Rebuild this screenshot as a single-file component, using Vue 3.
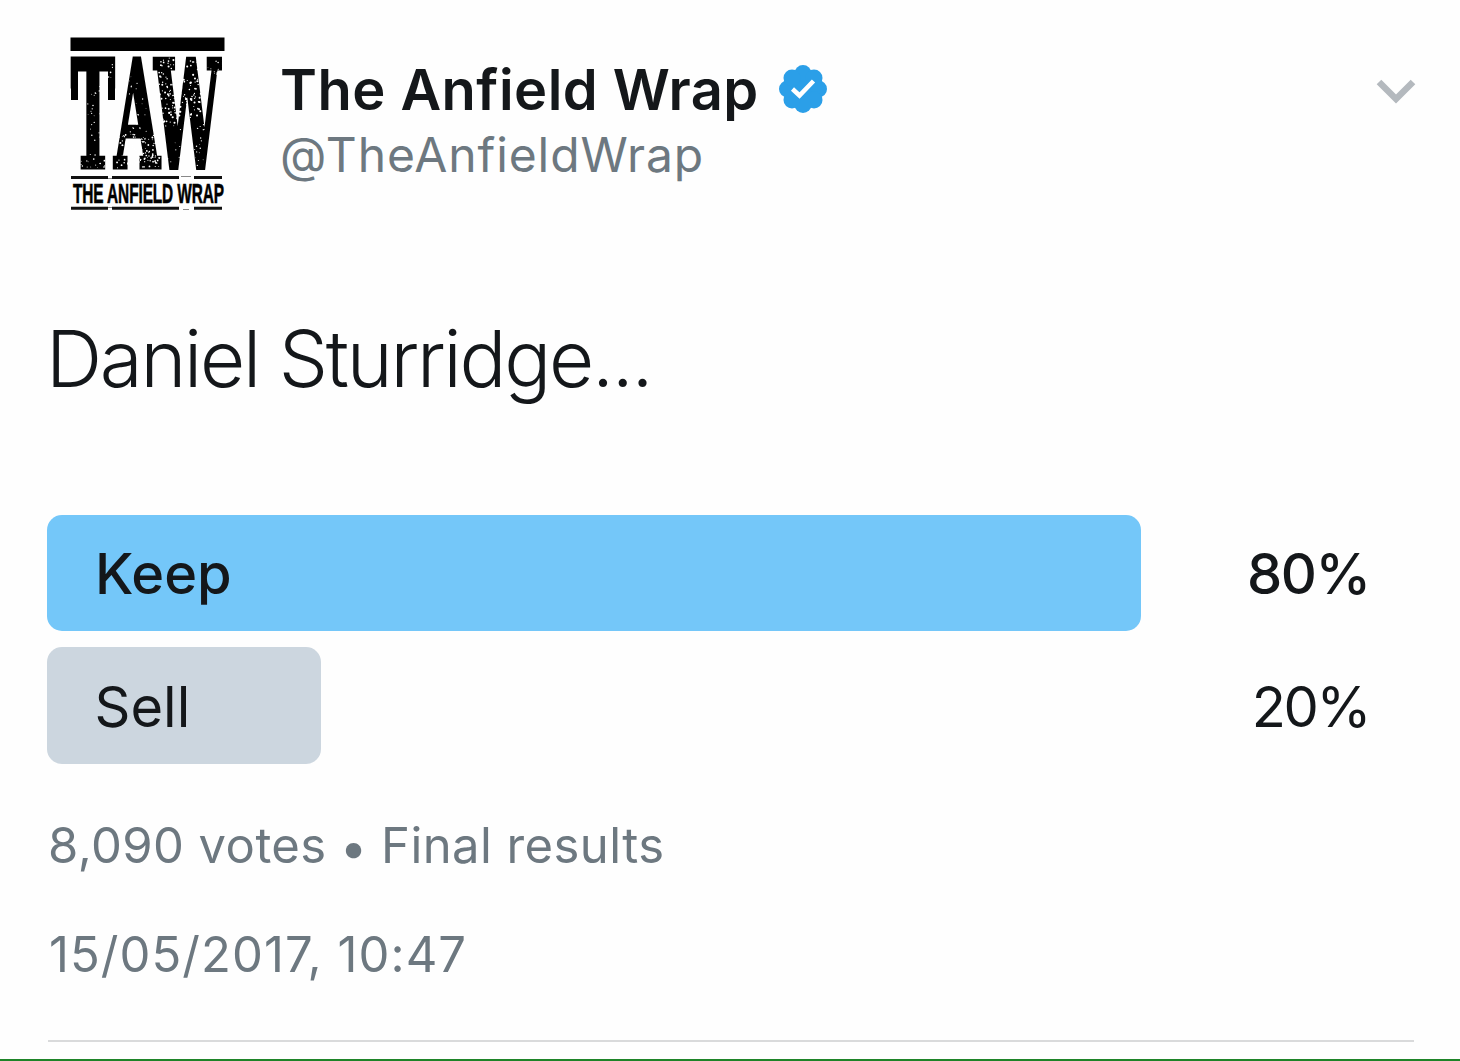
<script setup>
import { ref } from 'vue';

const author = {
  name: 'The Anfield Wrap',
  handle: '@TheAnfieldWrap'
};

const options = ref([
  { label: 'Keep', percent: 80, winner: true },
  { label: 'Sell', percent: 20, winner: false }
]);

// full track is 1368px wide
const barWidth = (percent) => `${percent * 13.68}px`;

// worn print specks over the logo letters
const areas = [
  { x: 54, y: 42, w: 14, h: 22, n: 8, r: 0.8 },
  { x: 40, y: 62, w: 14, h: 80, n: 24, r: 0.7 },
  { x: 34, y: 139, w: 26, h: 9, n: 14, r: 0.8 },
  { x: 82, y: 50, w: 18, h: 80, n: 34, r: 0.7 },
  { x: 70, y: 114, w: 44, h: 34, n: 110, r: 0.9 },
  { x: 112, y: 38, w: 22, h: 66, n: 100, r: 1 },
  { x: 132, y: 38, w: 22, h: 60, n: 80, r: 1 },
  { x: 154, y: 38, w: 20, h: 30, n: 14, r: 0.7 },
  { x: 118, y: 100, w: 40, h: 46, n: 45, r: 0.7 }
];
let seed = 7;
const random = () => {
  seed = (seed * 16807) % 2147483647;
  return seed / 2147483647;
};
const specks = areas.flatMap((a) =>
  Array.from({ length: a.n }, () => ({
    x: a.x + random() * a.w,
    y: a.y + random() * a.h,
    r: a.r * (0.5 + random() * 0.6)
  }))
);
</script>

<template>
  <article class="tweet">
    <header class="header">
      <svg class="avatar" viewBox="0 0 184 190" width="184" height="190">
        <rect x="23.500" y="17.500" width="154" height="13.500" />
        <text class="logo-letters" transform="translate(24 147) scale(0.4 1)" x="0 108 208">TAW</text>
        <rect x="24" y="38" width="7" height="42" />
        <rect x="61" y="38" width="7" height="42" />
        <circle v-for="(s, i) in specks" :key="i" :cx="s.x" :cy="s.y" :r="s.r" fill="#fff" />
        <path d="M24 157.500H61M65 157.500H132M147 157.500H175M24 188.300H61M65 188.300H132M147 188.300H175" stroke="#111" stroke-width="3" />
        <path d="M61 158.500H65M61 187.500H65M134 156.500H144M136 189.500H142" stroke="#888" stroke-width="1" />
        <text class="logo-name" transform="translate(26 182.500) scale(0.57 1)" textLength="265">THE ANFIELD WRAP</text>
      </svg>
      <div class="author">
        <div class="name-row">
          <span class="name">{{ author.name }}</span>
          <svg class="badge" viewBox="0 0 50 50" width="50" height="50">
            <g fill="#2b9fe8">
              <circle cx="25" cy="25" r="20" />
              <circle cx="25" cy="9.500" r="8.500" />
              <circle cx="36" cy="14" r="8.500" />
              <circle cx="40.500" cy="25" r="8.500" />
              <circle cx="36" cy="36" r="8.500" />
              <circle cx="25" cy="40.500" r="8.500" />
              <circle cx="14" cy="36" r="8.500" />
              <circle cx="9.500" cy="25" r="8.500" />
              <circle cx="14" cy="14" r="8.500" />
            </g>
            <path d="M14.500 25L21.500 31.500L35.500 17" fill="none" stroke="#fff" stroke-width="4.500" />
          </svg>
        </div>
        <div class="handle">{{ author.handle }}</div>
      </div>
      <svg class="caret" viewBox="0 0 44 30" width="44" height="30">
        <path d="M5 5L22 22L39 5" fill="none" stroke="#b4b9be" stroke-width="6.500" />
      </svg>
    </header>

    <p class="text">Daniel Sturridge...</p>

    <div class="poll">
      <div v-for="option in options" :key="option.label" class="option" :class="{ winner: option.winner }">
        <div class="bar" :style="{ width: barWidth(option.percent) }">
          <span class="label">{{ option.label }}</span>
        </div>
        <span class="percent">{{ option.percent }}%</span>
      </div>
    </div>

    <div class="votes">8,090 votes <span class="dot">•</span> Final results</div>
    <div class="date">15/05/2017, 10:47</div>
    <div class="divider"></div>
    <div class="edge"></div>
  </article>
</template>

<style>
body {
  margin: 0;
  background-color: #fefefe;
}
</style>

<style scoped>
.tweet {
  box-sizing: border-box;
  display: flex;
  flex-direction: column;
  width: 1460px;
  height: 1061px;
  padding: 20px 46px 0 47px;
  overflow: hidden;
  font-family: Inter, sans-serif;
  color: #14171a;
}

.header {
  display: flex;
  align-items: flex-start;
  height: 200px;
}

.avatar {
  flex: none;
  overflow: visible;
}

.logo-letters {
  font-family: "DejaVu Serif", serif;
  font-size: 147px;
  font-weight: 700;
  stroke: #000;
  stroke-width: 5;
}

.logo-name {
  font-family: "Liberation Sans", sans-serif;
  font-size: 27px;
  font-weight: 700;
  stroke: #000;
  stroke-width: 0.6;
}

.author {
  margin-left: 49px;
  padding-top: 36px;
}

.name-row {
  display: flex;
  align-items: center;
  height: 68px;
}

.name {
  font-size: 56px;
  font-weight: 600;
  line-height: 68px;
  letter-spacing: 0.48px;
  white-space: nowrap;
}

.badge {
  margin: -3px 0 0 19px;
}

.handle {
  margin-top: 1px;
  font-size: 48px;
  line-height: 60px;
  letter-spacing: 0.9px;
  color: #6d7880;
}

.caret {
  margin: 57px -4px 0 auto;
}

.text {
  margin: 92px 0 0 -1px;
  font-size: 78px;
  font-weight: 300;
  line-height: 94px;
  letter-spacing: -2.25px;
  white-space: nowrap;
}

.poll {
  display: flex;
  flex-direction: column;
  gap: 16px;
  margin-top: 108.500px;
}

.option {
  display: flex;
  align-items: center;
  justify-content: space-between;
  height: 116.500px;
  font-size: 56px;
}

.bar {
  display: flex;
  align-items: center;
  box-sizing: border-box;
  height: 100%;
  padding: 3px 0 0 47.500px;
  border-radius: 15px;
  background-color: #ccd6df;
}

.percent {
  padding-top: 3px;
  margin-right: 45px;
  letter-spacing: -2.4px;
}

.winner {
  font-weight: 500;
}

.winner .bar {
  padding-left: 48px;
  background-color: #74c7f9;
}

.winner .percent {
  margin-right: 44.500px;
  letter-spacing: -1.5px;
}

.votes,
.date {
  padding-left: 1px;
  font-size: 49px;
  line-height: 60px;
  color: #6d7880;
  white-space: nowrap;
}

.votes {
  margin-top: 52.500px;
  letter-spacing: 0.42px;
}

.dot {
  position: relative;
  top: 2px;
  margin: 0 -1px;
}

.date {
  margin-top: 49px;
  padding-left: 2px;
  letter-spacing: 1.05px;
}

.divider {
  height: 2px;
  margin: 55px 0 0 1px;
  background-color: #d9dadb;
}

.edge {
  height: 2px;
  margin: auto -46px 0 -47px;
  background-color: #1e8428;
}
</style>
